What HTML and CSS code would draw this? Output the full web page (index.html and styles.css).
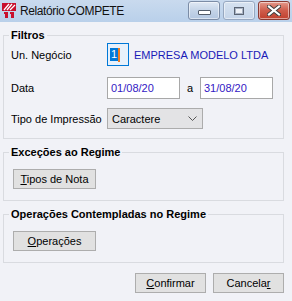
FILE: index.html
```html
<!DOCTYPE html>
<html lang="pt-BR">
<head>
  <meta charset="UTF-8">
  <title>Relatório COMPETE</title>
  <link rel="stylesheet" href="styles.css">
</head>
<body>

  <!-- Title bar -->
  <div class="titlebar">
    <svg class="app-icon" width="16" height="16" viewBox="0 0 16 16">
      <rect x="1" y="1" width="14" height="8" fill="#c8102e"/>
      <path d="M3 8 L8 2 M6 8 L11 2 M9 8 L14 3" stroke="#fff" stroke-width="1.3"/>
      <rect x="4" y="10" width="3" height="6" fill="#c8102e"/>
      <rect x="10" y="10" width="3" height="6" fill="#c8102e"/>
      <rect x="3" y="10" width="2" height="2" fill="#c8102e"/>
      <rect x="9" y="10" width="2" height="2" fill="#c8102e"/>
    </svg>
    <span class="title">Relatório COMPETE</span>
    <div class="caption-buttons">
      <div class="cap-btn minimize"><span class="min-glyph"></span></div>
      <div class="cap-btn maximize"><span class="max-glyph"></span></div>
      <div class="cap-btn close">
        <svg width="14" height="11" viewBox="0 0 14 11">
          <path d="M2 1.5 L12 9.5 M12 1.5 L2 9.5" stroke="#3b3b3b" stroke-width="4" stroke-linecap="square"/>
          <path d="M2 1.5 L12 9.5 M12 1.5 L2 9.5" stroke="#fff" stroke-width="2.2" stroke-linecap="square"/>
        </svg>
      </div>
    </div>
  </div>

  <div class="client">

    <!-- Filtros -->
    <section class="group">
      <h2 class="group-title">Filtros</h2>
      <div class="form-row row-unit">
        <span class="label">Un. Negócio</span>
        <span class="input code"><span class="selected">1</span><span class="caret"></span></span>
        <span class="company">EMPRESA MODELO LTDA</span>
      </div>

      <div class="form-row row-date">
        <span class="label">Data</span>
        <span class="input date">01/08/20</span>
        <span class="sep">a</span>
        <span class="input date">31/08/20</span>
      </div>

      <div class="form-row row-type">
        <span class="label">Tipo de Impressão</span>
        <span class="select">
          Caractere
          <svg class="chevron" width="9" height="5" viewBox="0 0 9 5"><path d="M0.5 0.5 L4.5 4.5 L8.5 0.5" fill="none" stroke="#555" stroke-width="1"/></svg>
        </span>
      </div>
    </section>

    <!-- Exceções ao Regime -->
    <section class="group">
      <h2 class="group-title">Exceções ao Regime</h2>
      <button class="btn wide"><u>T</u>ipos de Nota</button>
    </section>

    <!-- Operações Contempladas no Regime -->
    <section class="group">
      <h2 class="group-title">Operações Contempladas no Regime</h2>
      <button class="btn wide"><u>O</u>perações</button>
    </section>

    <div class="actions">
      <button class="btn"><u>C</u>onfirmar</button>
      <button class="btn">Cancela<u>r</u></button>
    </div>

  </div>

</body>
</html>
```

FILE: styles.css
```css
body {
  margin: 0;
  width: 292px;
  height: 301px;
  overflow: hidden;
  background-color: #f1f2f7;
  font-family: "Liberation Sans", Arial, sans-serif;
  font-size: 11px;
  color: #000;
}

/* Title bar */
.titlebar {
  height: 22px;
  display: flex;
  align-items: center;
  background: linear-gradient(#c9daee, #b9d0ea);
}
.app-icon {
  margin-left: 1px;
  margin-top: -2px;
}
.title {
  margin-left: 3px;
  font-size: 12px;
  letter-spacing: -0.4px;
  color: #111;
}
.caption-buttons {
  margin-left: auto;
  margin-right: 2px;
  align-self: flex-start;
  margin-top: 1px;
  display: flex;
  gap: 3px;
}
.cap-btn {
  width: 30px;
  height: 17px;
  border: 1px solid #7b8ca6;
  border-radius: 3px;
  display: flex;
  align-items: center;
  justify-content: center;
  background: linear-gradient(#dfe8f4, #c4d4e8 50%, #b3c7e1);
  box-shadow: inset 0 0 0 1px rgba(255, 255, 255, 0.5);
}
.cap-btn.maximize {
  border-color: #97a8c0;
  background: linear-gradient(#d6e2f0, #c5d5e9);
}
.cap-btn.close {
  border-color: #8a3a33;
  background: linear-gradient(#e49a8c, #cf5c4b 50%, #c0402e);
}
.min-glyph {
  width: 11px;
  height: 3px;
  margin-top: 4px;
  background: #fff;
  border: 1px solid #525c6a;
  border-radius: 1px;
}
.max-glyph {
  width: 8px;
  height: 6px;
  border: 1px solid #5b6574;
  background: #eef2f7;
  box-shadow: inset 0 0 0 1px #a9b4c4;
}

/* Client area */
.client {
  padding: 0 8px 0 3px;
}
.group {
  margin-top: 13px;
  border: 1px solid #d9dbe0;
  padding: 0 7px 11px 7px;
}
.group:first-child {
  padding-bottom: 9px;
}
.group-title {
  width: fit-content;
  margin: -8px 0 0 -2px;
  padding: 0 2px;
  height: 14px;
  line-height: 14px;
  font-size: 11px;
  font-weight: bold;
  background-color: #f1f2f7;
}

/* Filtros rows */
.form-row {
  display: flex;
  align-items: center;
}
.form-row .label {
  width: 96px;
  flex-shrink: 0;
}
.row-unit {
  margin-top: 1px;
  height: 23px;
}
.row-date {
  margin-top: 11px;
  height: 22px;
}
.row-type {
  margin-top: 9px;
  height: 21px;
}
.input {
  box-sizing: border-box;
  height: 100%;
  display: flex;
  align-items: center;
  padding-left: 3px;
  background: #fff;
  border: 1px solid #a8a8a8;
}
.input.code {
  width: 22px;
  border-color: #0078d7;
  background: #e8f1fb;
  padding-left: 2px;
}
.selected {
  background: #0078d7;
  color: #fff;
  line-height: 13px;
  padding: 0 1px;
}
.caret {
  width: 2px;
  height: 14px;
  background: #f07c1f;
}
.company {
  margin-left: 5px;
  color: #1a1ab8;
}
.input.date {
  width: 73px;
  color: #3318c4;
}
.sep {
  width: 20px;
  text-align: center;
}
.select {
  box-sizing: border-box;
  width: 96px;
  height: 100%;
  display: flex;
  align-items: center;
  padding: 0 5px 0 4px;
  background: #e3e3e5;
  border: 1px solid #acacac;
}
.chevron {
  margin-left: auto;
}

/* Buttons */
.btn {
  box-sizing: border-box;
  height: 20px;
  width: 71px;
  padding: 0;
  font-family: "Liberation Sans", Arial, sans-serif;
  font-size: 11px;
  color: #000;
  background: #e1e1e1;
  border: 1px solid #adadad;
}
.btn.wide {
  width: 83px;
  margin: 10px 0 0 2px;
  display: block;
}
.btn u {
  text-underline-offset: 1px;
}
.actions {
  margin-top: 10px;
  display: flex;
  justify-content: flex-end;
  gap: 7px;
}
```
